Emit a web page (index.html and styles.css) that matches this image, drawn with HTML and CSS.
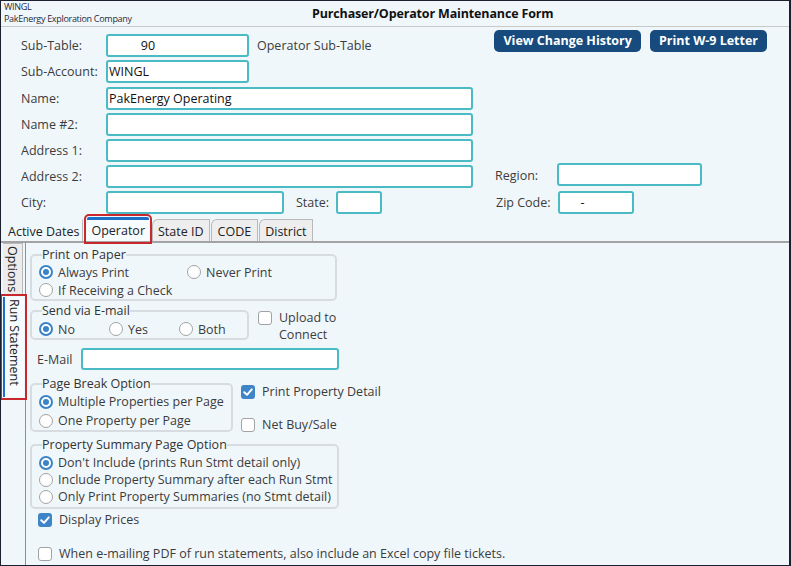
FILE: index.html
```html
<!DOCTYPE html>
<html>
<head>
<meta charset="utf-8">
<link rel="stylesheet" href="styles.css">
</head>
<body>
<div class="window">
  <header class="titlebar">
    <div class="company">
      <div>WINGL</div>
      <div>PakEnergy Exploration Company</div>
    </div>
    <h1 class="title">Purchaser/Operator Maintenance Form</h1>
  </header>

  <section class="form">
    <div class="row row-first">
      <span class="lbl">Sub-Table:</span>
      <div class="inp w-sub center">90</div>
      <span class="note">Operator Sub-Table</span>
      <div class="actions">
        <button class="btn">View Change History</button>
        <button class="btn">Print W-9 Letter</button>
      </div>
    </div>
    <div class="row">
      <span class="lbl">Sub-Account:</span>
      <div class="inp w-sub">WINGL</div>
    </div>
    <div class="row row-gap4">
      <span class="lbl">Name:</span>
      <div class="inp w-long">PakEnergy Operating</div>
    </div>
    <div class="row">
      <span class="lbl">Name #2:</span>
      <div class="inp w-long"></div>
    </div>
    <div class="row">
      <span class="lbl">Address 1:</span>
      <div class="inp w-long"></div>
    </div>
    <div class="row">
      <span class="lbl">Address 2:</span>
      <div class="inp w-long"></div>
      <span class="lbl-right up-lbl">Region:</span>
      <div class="inp w-region up2"></div>
    </div>
    <div class="row">
      <span class="lbl">City:</span>
      <div class="inp w-city"></div>
      <span class="lbl-state">State:</span>
      <div class="inp w-state"></div>
      <span class="lbl-right lbl-zip">Zip Code:</span>
      <div class="inp w-zip center">-</div>
    </div>
  </section>

  <nav class="tabs">
    <span class="tab t-active">Active Dates</span>
    <span class="tab t-op selected">Operator</span>
    <span class="tab t-state">State ID</span>
    <span class="tab t-code">CODE</span>
    <span class="tab t-dist">District</span>
  </nav>

  <div class="body">
    <div class="vtabs">
      <span class="vtab v-options">Options</span>
      <span class="vtab v-run selected">Run Statement</span>
    </div>

    <div class="panel">
      <fieldset class="group g-paper">
        <legend>Print on Paper</legend>
        <div class="paper-grid">
          <span class="opt"><i class="radio on"></i>Always Print</span>
          <span class="opt"><i class="radio"></i>Never Print</span>
          <span class="opt"><i class="radio"></i>If Receiving a Check</span>
        </div>
      </fieldset>

      <div class="line line-email">
        <fieldset class="group g-email">
          <legend>Send via E-mail</legend>
          <div class="email-opts">
            <span class="opt"><i class="radio on"></i>No</span>
            <span class="opt"><i class="radio"></i>Yes</span>
            <span class="opt"><i class="radio"></i>Both</span>
          </div>
        </fieldset>
        <span class="chk chk-upload"><i class="box"></i><span>Upload to<br>Connect</span></span>
      </div>

      <div class="mail-row">
        <span class="mail-lbl">E-Mail</span>
        <div class="inp w-mail"></div>
      </div>

      <div class="line line-page">
        <fieldset class="group g-page">
          <legend>Page Break Option</legend>
          <div class="stack s19">
            <span class="opt"><i class="radio on"></i>Multiple Properties per Page</span>
            <span class="opt"><i class="radio"></i>One Property per Page</span>
          </div>
        </fieldset>
        <div class="side-checks">
          <span class="chk"><i class="box on"><svg viewBox="0 0 14 14"><path d="M3.2 7.2 L6 9.8 L10.8 4.4" /></svg></i>Print Property Detail</span>
          <span class="chk chk-net"><i class="box"></i>Net Buy/Sale</span>
        </div>
      </div>

      <fieldset class="group g-summary">
        <legend>Property Summary Page Option</legend>
        <div class="stack s17">
          <span class="opt"><i class="radio on"></i>Don't Include (prints Run Stmt detail only)</span>
          <span class="opt"><i class="radio"></i>Include Property Summary after each Run Stmt</span>
          <span class="opt"><i class="radio"></i>Only Print Property Summaries (no Stmt detail)</span>
        </div>
      </fieldset>

      <span class="chk chk-prices"><i class="box on"><svg viewBox="0 0 14 14"><path d="M3.2 7.2 L6 9.8 L10.8 4.4" /></svg></i>Display Prices</span>
      <span class="chk chk-excel"><i class="box"></i>When e-mailing PDF of run statements, also include an Excel copy file tickets.</span>
    </div>
  </div>
</div>
</body>
</html>
```

FILE: styles.css
```css
* { box-sizing: border-box; }
html, body { margin: 0; padding: 0; background: #f0f7fb; }
body {
  font-family: "Open Sans", "Noto Sans", "Liberation Sans", sans-serif;
  font-size: 12.5px;
  color: #3c3c3c;
}
.window {
  width: 791px;
  height: 566px;
  border: 1px solid #1c1f2e;
  border-right-width: 2px;
  background: #f0f7fb;
  display: flex;
  flex-direction: column;
  overflow: hidden;
}

/* title bar */
.titlebar {
  height: 26px;
  flex: 0 0 26px;
  display: flex;
  align-items: flex-start;
  border-bottom: 1px solid #c8c8c8;
  padding-left: 3px;
}
.company {
  width: 308px;
  font-size: 9px;
  line-height: 12px;
  letter-spacing: -0.3px;
  color: #2a2a3a;
}
.title {
  margin: 0;
  font-size: 12.5px;
  font-weight: bold;
  color: #111;
  line-height: 26px;
  letter-spacing: -0.15px;
}

/* form */
.form {
  padding: 3px 0 0 20px;
}
.row {
  display: flex;
  align-items: center;
  height: 23px;
  margin-top: 3px;
}
.row-first {
  margin-top: 0;
  height: 27px;
  align-items: flex-start;
}
.row-first .lbl, .row-first .note { margin-top: 4px; line-height: 23px; }
.row-first .inp { margin-top: 4px; }
.row-gap4 { margin-top: 4px; }
.lbl { width: 85px; flex: 0 0 85px; }
.note { margin-left: 8px; }
.inp {
  height: 23px;
  border: 2px solid #4abac4;
  border-radius: 3px;
  background: #fff;
  color: #111;
  padding: 0 1px;
  line-height: 19px;
  font-size: 12.5px;
}
.center { text-align: center; }
.w-sub { width: 143px; }
.w-sub.center { padding-right: 60px; }
.w-long { width: 367px; }
.w-region { width: 145px; }
.w-city { width: 178px; }
.w-state { width: 46px; }
.w-zip.center { width: 76px; padding-right: 28px; }
.up2 { margin-top: -4px; }
.up-lbl { margin-top: -3px; }
.lbl-right { width: 62px; flex: 0 0 62px; margin-left: 22px; }
.lbl-state { width: 40px; flex: 0 0 40px; margin-left: 12px; }
.lbl-zip { margin-left: 114px; }
.actions {
  margin-left: auto;
  margin-right: 22px;
  display: flex;
  gap: 9px;
}
.btn {
  font-family: inherit;
  font-size: 12.5px;
  font-weight: bold;
  color: #fff;
  background: #174b7d;
  border: 0;
  border-radius: 5px;
  height: 22px;
  padding: 0 9px;
  line-height: 22px;
}

/* top tabs */
.tabs {
  display: flex;
  align-items: flex-end;
  gap: 1px;
  margin-top: 3px;
  height: 26px;
  padding-left: 3px;
  border-bottom: 2px solid #a3a3a3;
}
.tab {
  height: 22px;
  line-height: 23px;
  padding: 0 5px;
  background: #eeeeee;
  border: 1px solid #b9b9b9;
  border-bottom: 0;
  border-top-left-radius: 6px;
  color: #222;
}
.t-code { padding: 0 6px; }
.t-active {
  border-color: transparent;
  border-right-color: #b9b9b9;
  background: transparent;
  padding: 0 3px 0 3px;
}
.tab.selected {
  height: 24px;
  margin: 0 2px 0 3px;
  background: #f6fbfe;
  border: 0;
  border-top: 3px solid #1b6fc8;
  border-radius: 2px 2px 0 0;
  line-height: 21px;
  padding: 0 4px;
  outline: 2px solid #c8282c;
  outline-offset: 1px;
}

/* body */
.body {
  flex: 1;
  display: flex;
  min-height: 0;
}
.vtabs {
  width: 25px;
  flex: 0 0 25px;
  border-right: 1px solid #8f8f8f;
  display: flex;
  flex-direction: column;
  align-items: flex-start;
  padding-left: 2px;
}
.vtab {
  writing-mode: vertical-rl;
  width: 20px;
  line-height: 19px;
  color: #222;
  border: 1px solid #b9b9b9;
  border-left: 0;
  background: #ececec;
  padding: 2px 0;
}
.v-options { height: 52px; }
.vtab.selected {
  margin-top: 2px;
  height: 100px;
  width: 21px;
  background: #f6fbfe;
  border: 0;
  border-left: 2px solid #1b6fc8;
  padding: 2px 0 0 0;
  outline: 2px solid #c8282c;
  outline-offset: 1px;
}

.panel {
  flex: 1;
  padding: 4px 0 0 4px;
  display: flex;
  flex-direction: column;
  align-items: flex-start;
}
.group {
  margin: 0;
  border: 2px solid #d7dce1;
  border-radius: 5px;
  padding: 0 0 0 7px;
}
.group legend {
  padding: 0;
  margin-left: 3px;
  line-height: 16px;
  color: #333;
}
.opt {
  display: flex;
  align-items: center;
  gap: 5px;
  white-space: nowrap;
}
.radio {
  width: 14px;
  height: 14px;
  border-radius: 50%;
  border: 1.5px solid #a2a2a2;
  background: #fff;
  flex: 0 0 14px;
  position: relative;
}
.radio.on {
  border: 2px solid #3b82c6;
  background: #fff;
}
.radio.on::after {
  content: "";
  position: absolute;
  left: 2px; top: 2px;
  width: 6px; height: 6px;
  border-radius: 50%;
  background: #3b82c6;
}

.g-paper { width: 307px; height: 54px; }
.paper-grid {
  display: grid;
  grid-template-columns: 148px auto;
  grid-auto-rows: 18px;
}

.line { display: flex; align-items: flex-start; }
.line-email { margin-top: 2px; height: 37px; }
.g-email { width: 219px; height: 37px; }
.email-opts {
  display: grid;
  grid-template-columns: 70px 70px auto;
  height: 18px;
  margin-top: 1px;
  align-items: center;
}
.chk {
  display: flex;
  align-items: center;
  gap: 7px;
  white-space: nowrap;
  line-height: 16px;
}
.box {
  width: 14px;
  height: 14px;
  flex: 0 0 14px;
  border: 1.5px solid #a2a2a2;
  border-radius: 3px;
  background: #fff;
  display: block;
}
.box.on {
  border: 0;
  background: #3e85c8;
}
.box svg { width: 14px; height: 14px; display: block; }
.box svg path { fill: none; stroke: #fff; stroke-width: 2; stroke-linecap: round; stroke-linejoin: round; }
.chk-upload {
  margin: 8px 0 0 9px;
  align-items: flex-start;
  line-height: 17px;
}
.chk-upload span { margin-top: -2px; }

.mail-row {
  display: flex;
  align-items: center;
  margin-top: 8px;
  padding-left: 7px;
}
.mail-lbl { width: 44px; }
.w-mail { width: 258px; height: 22px; }

.line-page { margin-top: 6px; height: 56px; }
.g-page { width: 203px; height: 56px; }
.stack { display: grid; }
.s19 { grid-auto-rows: 19px; }
.s17 { grid-auto-rows: 17px; }
.side-checks {
  margin-left: 8px;
  padding-top: 8px;
  display: flex;
  flex-direction: column;
}
.chk-net { margin-top: 17px; }
.g-summary { margin-top: 5px; width: 309px; height: 72px; }
.g-summary .stack { margin-top: 1px; }

.chk-prices { margin: 3px 0 0 8px; height: 16px; }
.chk-excel { margin: 18px 0 0 8px; height: 16px; }
```
